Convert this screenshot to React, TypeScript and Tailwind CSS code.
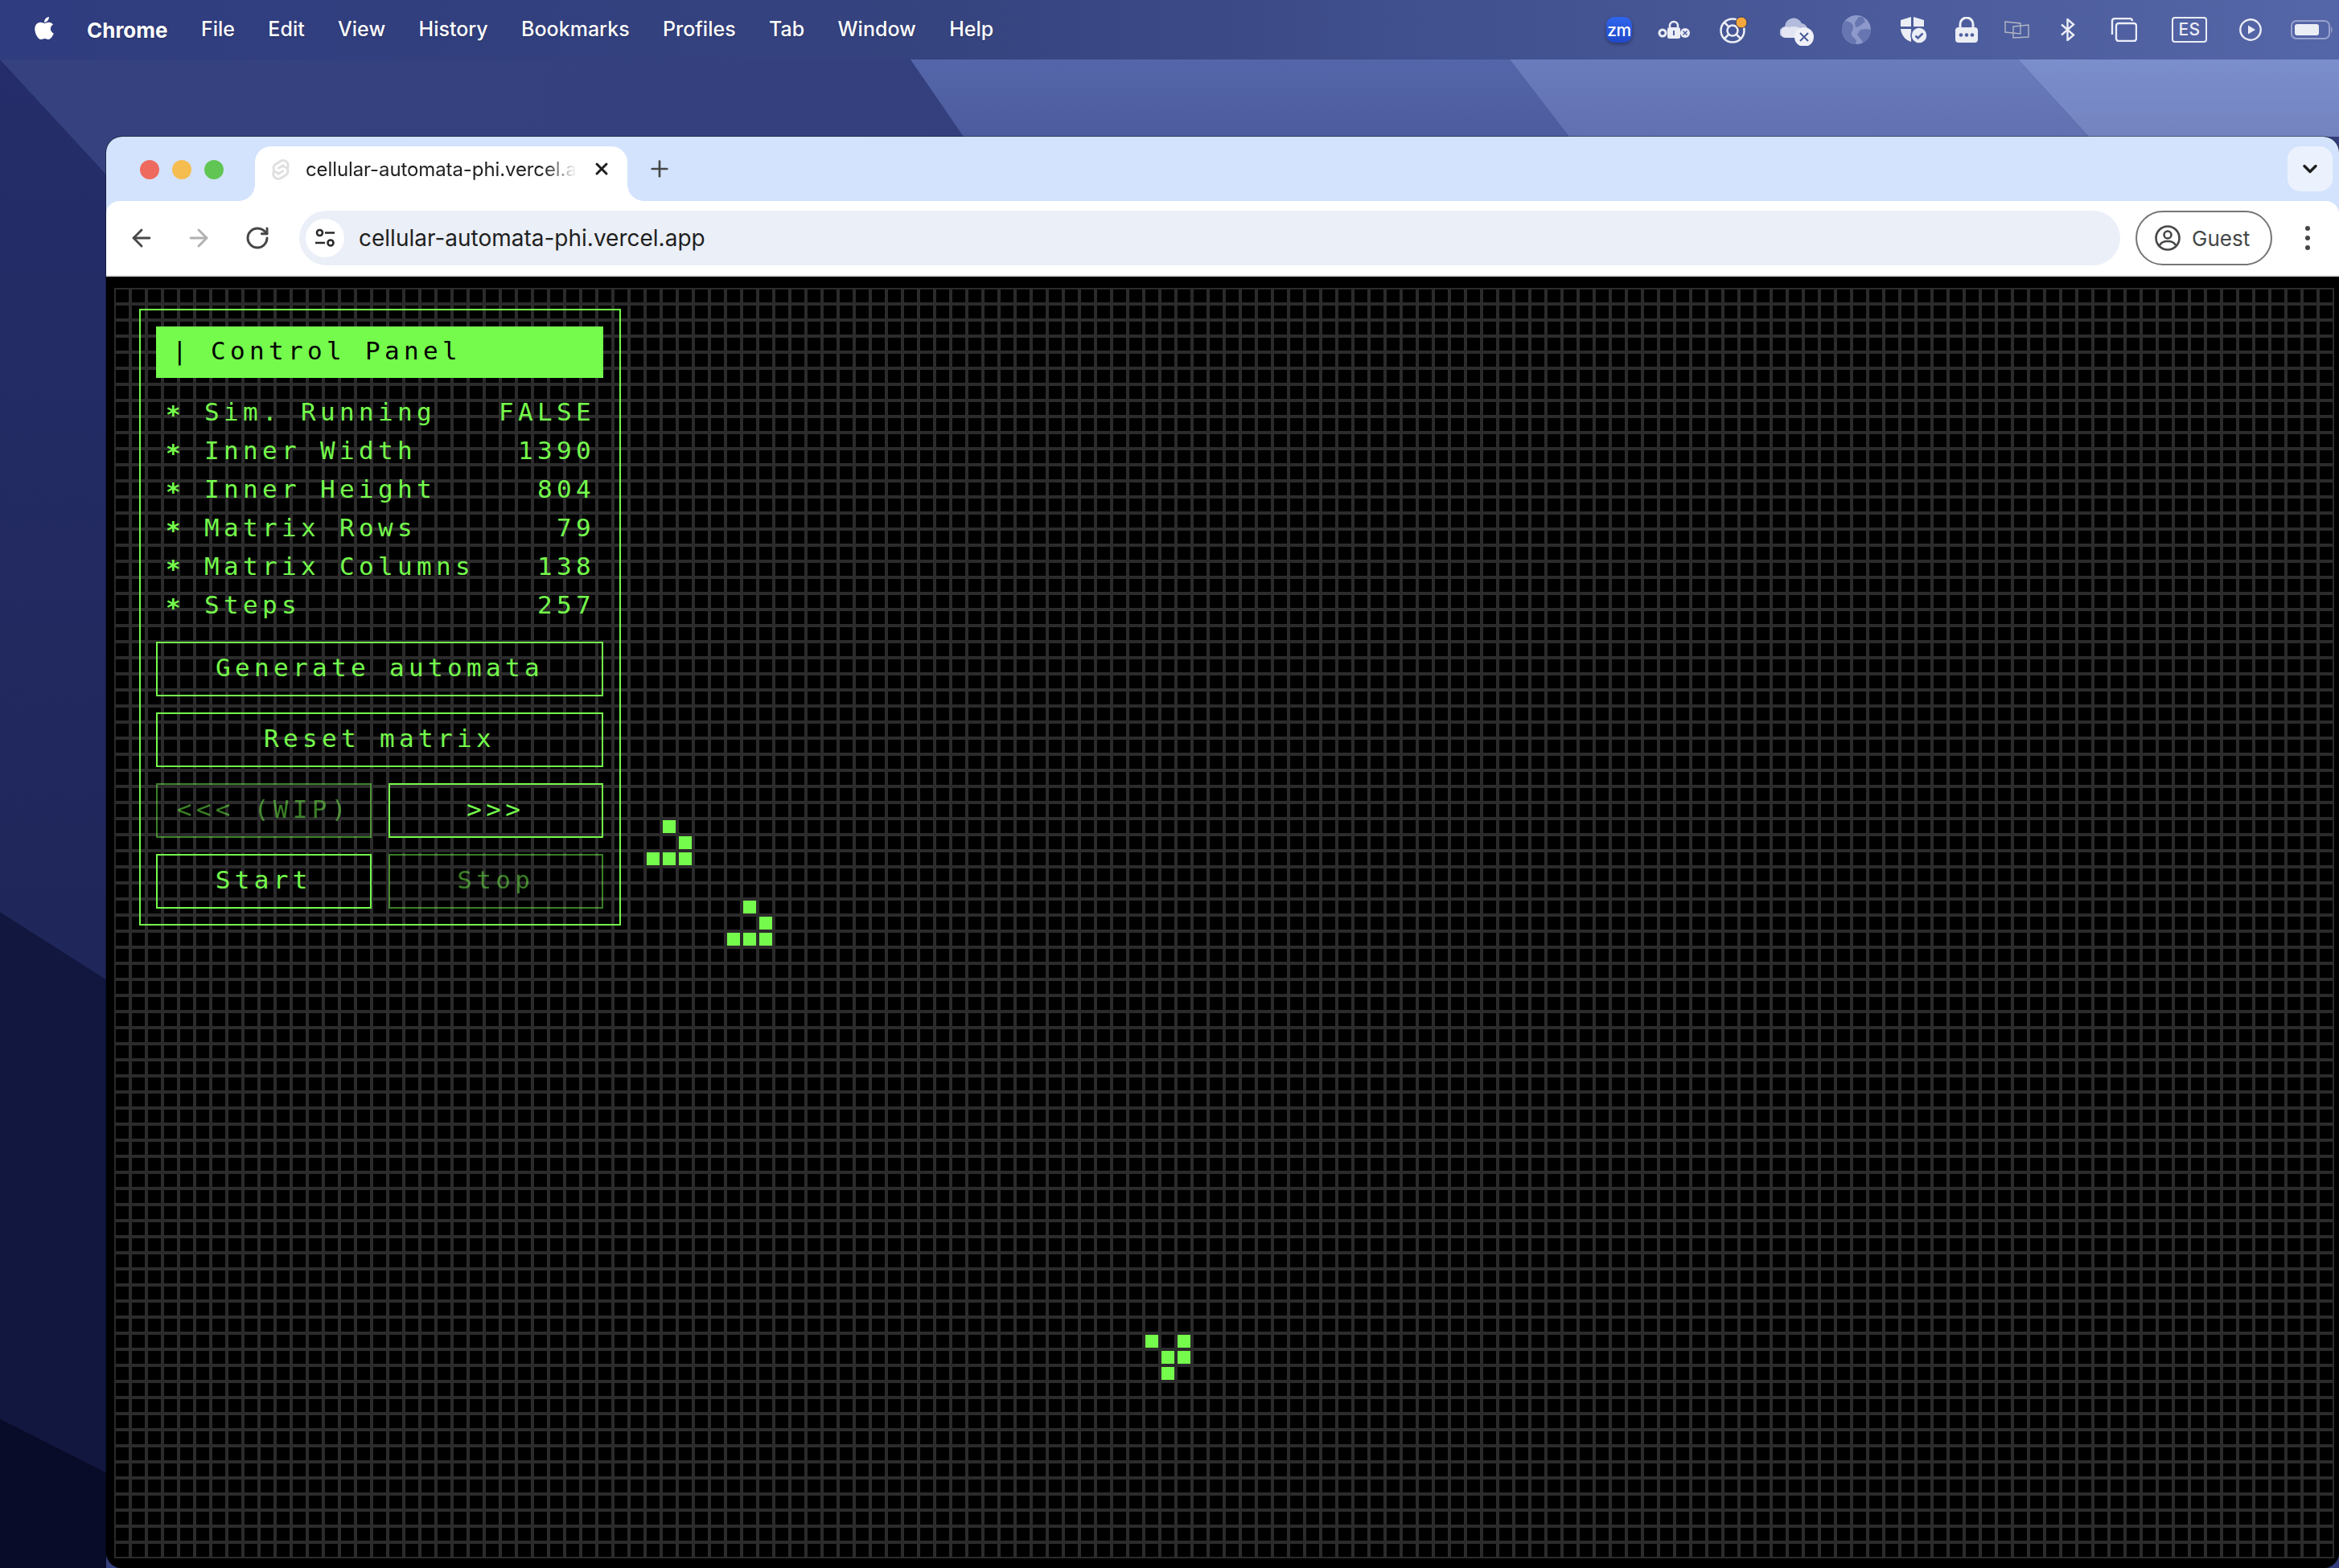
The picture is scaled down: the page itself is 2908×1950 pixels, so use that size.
import React from "react";
import { FaApple } from "react-icons/fa";
import { SiSvelte } from "react-icons/si";
import { ArrowLeft, ArrowRight, RotateCw, X, Plus, ChevronDown } from "lucide-react";

const MENU = ["File", "Edit", "View", "History", "Bookmarks", "Profiles", "Tab", "Window", "Help"];

const STATS: [string, string][] = [
  ["Sim. Running", "FALSE"],
  ["Inner Width", "1390"],
  ["Inner Height", "804"],
  ["Matrix Rows", "79"],
  ["Matrix Columns", "138"],
  ["Steps", "257"],
];

const LIVE: [number, number][] = [
  [34, 33], [35, 34], [33, 35], [34, 35], [35, 35],
  [39, 38], [40, 39], [38, 40], [39, 40], [40, 40],
  [64, 65], [66, 65], [65, 66], [66, 66], [65, 67],
];

function Wallpaper() {
  return (
    <svg className="absolute inset-0" width="2908" height="1950" viewBox="0 0 2908 1950">
      <defs>
        <linearGradient id="base" x1="0" y1="0" x2="1" y2="0.2">
          <stop offset="0" stopColor="#35427f" />
          <stop offset="1" stopColor="#323e7b" />
        </linearGradient>
        <linearGradient id="ra" x1="0" y1="0" x2="0" y2="1">
          <stop offset="0" stopColor="#5466a9" />
          <stop offset="1" stopColor="#4c5b9e" />
        </linearGradient>
        <linearGradient id="rb" x1="0" y1="0" x2="0" y2="1">
          <stop offset="0" stopColor="#6b7cbd" />
          <stop offset="1" stopColor="#6070b0" />
        </linearGradient>
        <linearGradient id="rc" x1="0" y1="0" x2="0" y2="1">
          <stop offset="0" stopColor="#7b8fcc" />
          <stop offset="1" stopColor="#7383c0" />
        </linearGradient>
        <linearGradient id="left" x1="0" y1="0" x2="0" y2="1">
          <stop offset="0" stopColor="#252e6a" />
          <stop offset="1" stopColor="#1f2659" />
        </linearGradient>
      </defs>
      <rect width="2908" height="1950" fill="url(#base)" />
      <polygon points="1132,74 1877,74 1951,170 1198,170" fill="url(#ra)" />
      <polygon points="1877,74 2509,74 2597,170 1951,170" fill="url(#rb)" />
      <polygon points="2509,74 2908,74 2908,170 2597,170" fill="url(#rc)" />
      <polygon points="0,74 132,217 132,1218 0,1134" fill="url(#left)" />
      <polygon points="0,1134 132,1218 132,1831 0,1764" fill="#11173f" />
      <polygon points="0,1764 132,1831 132,1950 0,1950" fill="#090c28" />
    </svg>
  );
}

function Zoom() {
  return (
    <div className="flex h-[32px] w-[32px] items-center justify-center rounded-[10px] bg-[linear-gradient(to_bottom,#2f66ee,#2048c8)] text-[21px] font-medium leading-none tracking-[-0.5px] text-white shadow-[0_2px_4px_rgba(0,0,0,0.35)]">
      zm
    </div>
  );
}

function Keys() {
  return (
    <svg width="40" height="24" viewBox="0 0 40 24" fill="#eceef6">
      <circle cx="6" cy="16" r="4" fill="none" stroke="#eceef6" strokeWidth="3" />
      <circle cx="34" cy="16" r="6" />
      <path d="M31.5 13.5l5 5m0-5l-5 5" stroke="#4f5f9f" strokeWidth="1.5" />
      <path d="M15 9V7a5 5 0 0 1 10 0v2" fill="none" stroke="#eceef6" strokeWidth="2.5" />
      <rect x="12" y="9" width="16" height="14" rx="2.5" />
      <rect x="19" y="13" width="2" height="6" fill="#4f5f9f" />
    </svg>
  );
}

function Buoy() {
  return (
    <svg width="36" height="36" viewBox="0 0 36 36" fill="none" stroke="#eceef6">
      <circle cx="16" cy="19" r="14.5" strokeWidth="2.5" />
      <circle cx="16" cy="19" r="6.5" strokeWidth="2.5" />
      <path d="M6 9l6 6M26 29l-6-6M26 9l-6 6M6 29l6-6" strokeWidth="2.5" />
      <circle cx="27" cy="9" r="7" fill="#f3a63b" stroke="#2e3660" strokeWidth="1" />
    </svg>
  );
}

function CloudX() {
  return (
    <svg width="42" height="36" viewBox="0 0 42 36">
      <path d="M7 26a7 7 0 0 1-1-14 11 11 0 0 1 21-4 8 8 0 0 1 7 10l-6 8z" fill="#b3bcdc" />
      <path d="M7 26a7 7 0 0 1-6-7 7 7 0 0 1 10-6c6-2 14-1 20 5l-6 8z" fill="#e3e6f2" />
      <circle cx="30" cy="25" r="12" fill="#f0f1f8" />
      <path d="M25 20l10 10m0-10L25 30" stroke="#4a5a98" strokeWidth="2" />
    </svg>
  );
}

function Globe() {
  return (
    <svg width="36" height="36" viewBox="0 0 36 36">
      <circle cx="18" cy="18" r="18" fill="#8c99ca" />
      <path d="M5 7c5 1 9 3 9 8s-3 5-2 9 5 4 6 8l-1 4C8 35 0 27 0 18 0 13 2 10 5 7zM26 2l3 6-8 6-4 1-1-6 5-7zM19 24l4-6 8-1 5 1c0 7-4 13-10 16l-3-5z" fill="#4f5f9f" opacity="0.6" />
    </svg>
  );
}

function Shield() {
  return (
    <svg width="34" height="34" viewBox="0 0 34 34">
      <path d="M1 5l13-4v12H1zM17 1l13 4v8H17zM1 16h13v16C7 30 2 24 1 16z" fill="#eceef6" />
      <path d="M17 16h5v6h-5z" fill="#eceef6" />
      <circle cx="24" cy="24" r="10" fill="#eceef6" stroke="#4f5f9f" strokeWidth="1.5" />
      <path d="M19.5 24.5l3 3 6-6" fill="none" stroke="#4f5f9f" strokeWidth="2.5" />
    </svg>
  );
}

function LockDots() {
  return (
    <svg width="28" height="32" viewBox="0 0 28 32">
      <path d="M6 14V9a8 8 0 0 1 16 0v5" fill="none" stroke="#eceef6" strokeWidth="3" />
      <rect y="13" width="28" height="19" rx="4" fill="#eceef6" />
      <circle cx="7" cy="22.5" r="2.3" fill="#4f5f9f" />
      <circle cx="14" cy="22.5" r="2.3" fill="#4f5f9f" />
      <circle cx="21" cy="22.5" r="2.3" fill="#4f5f9f" />
    </svg>
  );
}

function Windows() {
  return (
    <svg width="31" height="22" viewBox="0 0 31 22" fill="none" stroke="#b2b6c4" strokeWidth="1.4">
      <path d="M1 1l19 2v13L1 14z" />
      <path d="M11 7l19-2v15l-19 1z" />
    </svg>
  );
}

function Bluetooth() {
  return (
    <svg width="18" height="28" viewBox="0 0 18 28" fill="none" stroke="#eceef6" strokeWidth="2.4">
      <path d="M1 7.5l15 13L8.500 27V1L16 7.500 1 20.500" />
    </svg>
  );
}

function Squares() {
  return (
    <svg width="34" height="30" viewBox="0 0 34 30" fill="none" stroke="#eceef6" strokeWidth="2.4">
      <path d="M3 21V4a3 3 0 0 1 3-3h19a3 3 0 0 1 3 3" />
      <rect x="8" y="7" width="25" height="22" rx="3" />
    </svg>
  );
}

function Es() {
  return (
    <div className="flex h-[32px] w-[44px] items-center justify-center rounded-[4px] border-2 border-[#eceef6] font-['Inter',sans-serif] text-[21px] font-medium tracking-[0.5px] text-[#eceef6]">
      ES
    </div>
  );
}

function Play() {
  return (
    <svg width="28" height="28" viewBox="0 0 28 28">
      <circle cx="14" cy="14" r="12.700" fill="none" stroke="#eceef6" strokeWidth="2.4" />
      <path d="M11 8.500l9 5.500-9 5.500z" fill="#eceef6" />
    </svg>
  );
}

function Battery() {
  return (
    <svg width="52" height="24" viewBox="0 0 52 24">
      <rect x="1" y="1" width="47" height="22" rx="6" fill="none" stroke="#98a2ce" strokeWidth="2" />
      <rect x="5" y="5" width="30" height="14" rx="3" fill="#eceef6" />
      <path d="M50 8c2 1 2 7 0 8z" fill="#98a2ce" />
    </svg>
  );
}

function MenuBar() {
  return (
    <div className="relative flex h-[74px] items-center bg-[linear-gradient(to_right,#2f3c7f,#35437f_40%,#5566a8)] pl-[41px] pr-[8px] font-['Inter',sans-serif] text-[25px] text-white">
      <FaApple className="mb-[4px] h-[32px] w-[28px]" />
      <div className="ml-[39px] flex items-center gap-[41.400px] [text-shadow:0_1px_2px_rgba(0,0,0,0.3)]">
        <span className="text-[26px] font-bold">Chrome</span>
        {MENU.map((m) => (
          <span key={m} className="font-medium">{m}</span>
        ))}
      </div>
      <div className="ml-auto flex items-center">
        <Zoom />
        <div className="ml-[32px]"><Keys /></div>
        <div className="ml-[37px]"><Buoy /></div>
        <div className="ml-[39px] mt-[4px]"><CloudX /></div>
        <div className="ml-[35px]"><Globe /></div>
        <div className="ml-[36px]"><Shield /></div>
        <div className="ml-[35px]"><LockDots /></div>
        <div className="ml-[33px]"><Windows /></div>
        <div className="ml-[39px]"><Bluetooth /></div>
        <div className="ml-[43px]"><Squares /></div>
        <div className="ml-[43px]"><Es /></div>
        <div className="ml-[40px]"><Play /></div>
        <div className="ml-[36px]"><Battery /></div>
      </div>
    </div>
  );
}

function TabStrip() {
  return (
    <div className="relative flex h-[80px] items-start bg-[#d3e3fd]">
      <div className="ml-[42px] mt-[29px] flex gap-[16px]">
        <span className="h-[24px] w-[24px] rounded-full bg-[#ee6a5f]" />
        <span className="h-[24px] w-[24px] rounded-full bg-[#f5bd4f]" />
        <span className="h-[24px] w-[24px] rounded-full bg-[#61c554]" />
      </div>
      <div className="relative ml-[39px] mt-[12px] flex h-[68px] w-[463px] items-center rounded-t-[20px] bg-white pb-[10px] pl-[19px]">
        <span className="absolute bottom-0 left-[-20px] h-[20px] w-[20px] bg-[radial-gradient(circle_at_0_0,#d3e3fd_19.500px,#fff_20px)]" />
        <span className="absolute bottom-0 right-[-20px] h-[20px] w-[20px] bg-[radial-gradient(circle_at_100%_0,#d3e3fd_19.500px,#fff_20px)]" />
        <SiSvelte className="h-[30px] w-[26px] text-[#e0e0e0]" />
        <span className="ml-[18px] whitespace-nowrap font-['Inter',sans-serif] text-[24px] tracking-[-0.1px] text-[#1f1f1f] [mask-image:linear-gradient(to_right,#000_88%,transparent)]">
          cellular-automata-phi.vercel.a
        </span>
        <X className="absolute left-[419px] top-[16px] h-[24px] w-[24px] text-[#1f1f1f]" strokeWidth={3} />
      </div>
      <Plus className="ml-[24px] mt-[24px] h-[32px] w-[32px] text-[#444746]" strokeWidth={2} />
      <div className="absolute right-[8px] top-[12px] flex h-[56px] w-[56px] items-center justify-center rounded-[16px] bg-[#ecf2fd]">
        <ChevronDown className="h-[28px] w-[28px] text-[#1f1f1f]" strokeWidth={3} />
      </div>
    </div>
  );
}

function SiteIcon() {
  return (
    <div className="flex h-[48px] w-[48px] items-center justify-center rounded-full bg-white">
      <svg width="24" height="24" viewBox="0 0 24 24" fill="none" stroke="#2a2a2a" strokeWidth="2.600">
        <circle cx="5.500" cy="5.500" r="3.500" />
        <path d="M12 5.500h12M0 18h12" />
        <circle cx="19" cy="18" r="3.500" />
      </svg>
    </div>
  );
}

function Toolbar() {
  return (
    <div className="flex h-[94px] items-center rounded-t-[16px] border-b-2 border-[#e2e2e2] bg-white">
      <ArrowLeft className="ml-[27px] h-[34px] w-[34px] text-[#474747]" strokeWidth={2} />
      <ArrowRight className="ml-[37px] h-[34px] w-[34px] text-[#b0b0b0]" strokeWidth={2} />
      <RotateCw className="ml-[40px] h-[32px] w-[32px] text-[#474747]" strokeWidth={2.2} />
      <div className="ml-[36px] flex h-[68px] w-[2264px] items-center rounded-full bg-[#ebeff7] pl-[8px]">
        <SiteIcon />
        <span className="ml-[18px] font-['Inter',sans-serif] text-[28px] text-[#1f1f1f]">
          cellular-automata-phi.vercel.app
        </span>
      </div>
      <div className="ml-[19px] flex h-[68px] w-[170px] items-center rounded-full border-2 border-[#757575] pl-[22px] font-['Inter',sans-serif] text-[26px] text-[#444746]">
        <svg width="32" height="32" viewBox="0 0 32 32" fill="none" stroke="#444746" strokeWidth="2.600">
          <circle cx="16" cy="16" r="14.500" />
          <circle cx="16" cy="12" r="4.500" />
          <path d="M6 25c2-4 6-5 10-5s8 1 10 5" />
        </svg>
        <span className="ml-[14px]">Guest</span>
      </div>
      <div className="ml-[41px] flex flex-col gap-[6px]">
        <span className="h-[6px] w-[6px] rounded-full bg-[#444746]" />
        <span className="h-[6px] w-[6px] rounded-full bg-[#444746]" />
        <span className="h-[6px] w-[6px] rounded-full bg-[#444746]" />
      </div>
    </div>
  );
}

function PanelButton({ label, dim, className }: { label: string; dim?: boolean; className?: string }) {
  return (
    <button
      className={
        (dim ? "opacity-50 " : "") +
        "flex h-[68px] items-center justify-center border-2 border-[#75fb4c] pb-[4px] text-[#75fb4c] " +
        (className ?? "")
      }
    >
      {label}
    </button>
  );
}

function ControlPanel() {
  return (
    <div className="absolute left-[31px] top-[26px] w-[599px] border-2 border-[#75fb4c] pb-[19px] pl-[19px] pr-[20px] pt-[20px] font-['DejaVu_Sans_Mono',monospace] text-[31px] tracking-[5.340px] text-[#75fb4c]">
      <div className="flex h-[64px] items-center whitespace-pre bg-[#75fb4c] pb-[3px] pl-[20px] text-black">| Control Panel</div>
      <div className="mt-[18px] flex flex-col pl-[12px] pr-[10px]">
        {STATS.map(([k, v]) => (
          <div key={k} className="flex h-[48px] items-center justify-between whitespace-pre">
            <span><span className="relative top-[3px] font-bold">*</span>{" " + k}</span>
            <span>{v}</span>
          </div>
        ))}
      </div>
      <div className="mt-[22px] flex flex-col gap-[20px]">
        <PanelButton label="Generate automata" />
        <PanelButton label="Reset matrix" />
        <div className="grid grid-cols-2 gap-x-[21px] gap-y-[20px]">
          <PanelButton label="<<< (WIP)" dim />
          <PanelButton label=">>>" />
          <PanelButton label="Start" />
          <PanelButton label="Stop" dim />
        </div>
      </div>
    </div>
  );
}

function Matrix() {
  return (
    <div className="relative h-[1580px] w-[2760px] bg-[linear-gradient(to_right,#2b2b2b_2px,transparent_2px,transparent_18px,#2b2b2b_18px),linear-gradient(to_bottom,#2b2b2b_2px,transparent_2px,transparent_18px,#2b2b2b_18px)] bg-[size:20px_20px]">
      {LIVE.map(([c, r]) => (
        <span
          key={c + "-" + r}
          className="absolute h-[16px] w-[16px] bg-[#75fb4c]"
          style={{ left: c * 20 + 2, top: r * 20 + 2 }}
        />
      ))}
      <ControlPanel />
    </div>
  );
}

export default function App() {
  return (
    <div className="relative h-[1950px] w-[2908px] overflow-hidden bg-[#35427f]">
      <Wallpaper />
      <MenuBar />
      <div className="relative ml-[132px] mt-[96px] flex h-[1780px] flex-col overflow-hidden rounded-[20px] bg-black shadow-[0_0_0_1px_rgba(0,0,0,0.35)]">
        <TabStrip />
        <div className="bg-[#d3e3fd]">
          <Toolbar />
        </div>
        <div className="flex-1 bg-black pl-[10px] pt-[14px]">
          <Matrix />
        </div>
      </div>
    </div>
  );
}
